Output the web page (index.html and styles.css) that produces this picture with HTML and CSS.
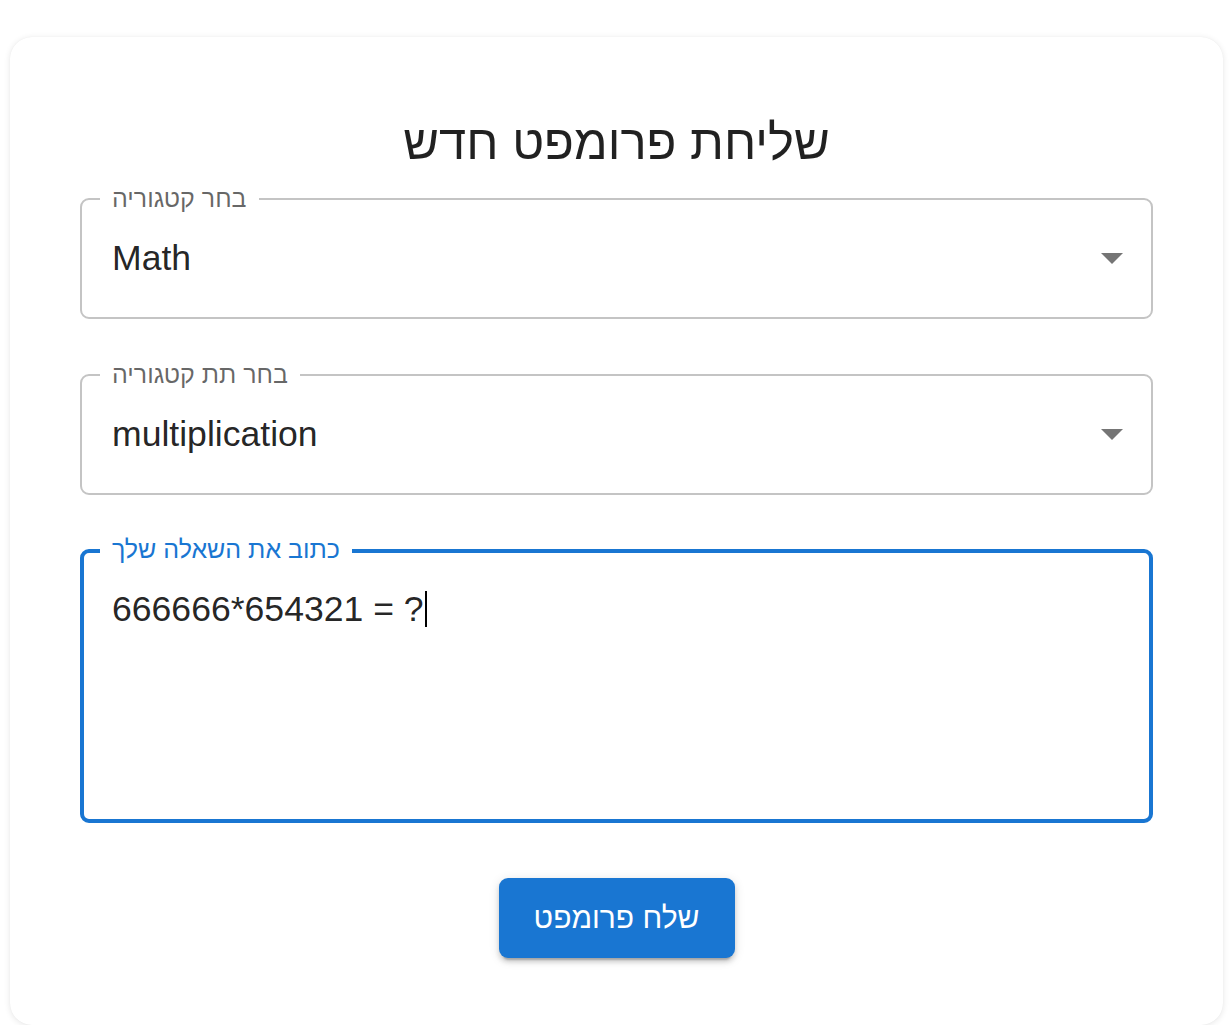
FILE: index.html
```html
<!DOCTYPE html>
<html lang="he">
<head>
<meta charset="utf-8">
<title>שליחת פרומפט חדש</title>
<link rel="stylesheet" href="styles.css">
</head>
<body>
<main class="card">
  <h1 class="title">שליחת פרומפט חדש</h1>
  <form class="form">
    <div class="field field-select">
      <span class="field-label">בחר קטגוריה</span>
      <span class="field-value">Math</span>
      <svg class="arrow" width="22" height="11" viewBox="0 0 22 11"><path d="M0 0h22L11 11z" fill="#757575"/></svg>
    </div>
    <div class="field field-select">
      <span class="field-label">בחר תת קטגוריה</span>
      <span class="field-value">multiplication</span>
      <svg class="arrow" width="22" height="11" viewBox="0 0 22 11"><path d="M0 0h22L11 11z" fill="#757575"/></svg>
    </div>
    <div class="field field-area">
      <span class="field-label">כתוב את השאלה שלך</span>
      <div class="area-text">666666*654321 = ?<span class="caret"></span></div>
    </div>
    <div class="actions">
      <button type="button" class="btn">שלח פרומפט</button>
    </div>
  </form>
</main>
</body>
</html>
```
FILE: styles.css
```css
* { box-sizing: border-box; }
html, body { margin: 0; padding: 0; background: #fff; }
body {
  font-family: "Liberation Sans", Arial, sans-serif;
  color: rgba(0, 0, 0, 0.87);
}
.card {
  margin: 37px 0 0 10px;
  width: 1213px;
  padding: 70px 70px 67px;
  background: #fff;
  border-radius: 22px;
  box-shadow: 0 1px 6px rgba(0, 0, 0, 0.10), 0 0 1px rgba(0, 0, 0, 0.06);
}
.title {
  margin: 0;
  font-size: 49px;
  font-weight: 400;
  line-height: 70px;
  text-align: center;
  color: rgba(0, 0, 0, 0.87);
}
.form {
  margin-top: 21px;
  display: flex;
  flex-direction: column;
  gap: 54.5px;
}
.field {
  position: relative;
  border: 2px solid #c4c4c4;
  border-radius: 9px;
}
.field-select {
  height: 121px;
  display: flex;
  align-items: center;
  padding: 0 28px 0 30px;
}
.field-label {
  position: absolute;
  left: 18px;
  top: -17px;
  padding: 0 12px;
  background: #fff;
  font-size: 25px;
  line-height: 30px;
  color: rgba(0, 0, 0, 0.6);
}
.field-value {
  flex: 1;
  font-size: 35.6px;
  line-height: 51px;
}
.arrow { display: block; }
.field-area {
  height: 274px;
  border: 4px solid #1976d2;
  padding: 31px 28px 0;
}
.field-area .field-label {
  left: 16px;
  top: -19px;
  color: #1976d2;
}
.area-text {
  font-size: 35.6px;
  line-height: 51px;
}
.caret {
  display: inline-block;
  width: 2px;
  height: 36px;
  margin-left: 1px;
  background: #000;
  vertical-align: -6px;
}
.actions {
  display: flex;
  justify-content: center;
}
.btn {
  width: 236px;
  height: 80px;
  border: 0;
  border-radius: 9px;
  background: #1976d2;
  color: #fff;
  font-family: "Liberation Sans", Arial, sans-serif;
  font-size: 30px;
  font-weight: 400;
  cursor: pointer;
  box-shadow: 0 6px 2px -4px rgba(0, 0, 0, 0.2), 0 4px 5px rgba(0, 0, 0, 0.14), 0 2px 11px rgba(0, 0, 0, 0.12);
}
```
